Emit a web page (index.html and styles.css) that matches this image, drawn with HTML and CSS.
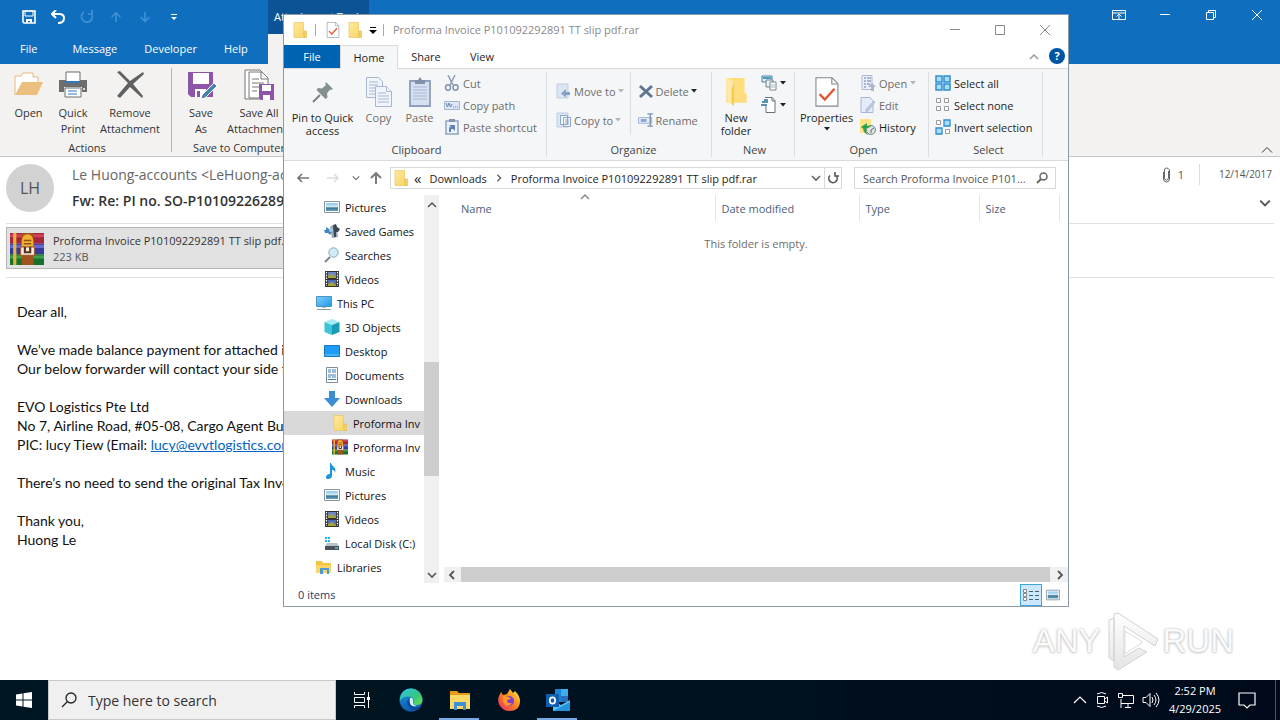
FILE: index.html
```html
<!DOCTYPE html>
<html lang="en">
<head>
<meta charset="utf-8">
<title>Desktop</title>
<link rel="stylesheet" href="styles.css">
</head>
<body>
<svg class="sprite" aria-hidden="true">
  <defs>
    <linearGradient id="gFolder" x1="0" x2="1" y1="0" y2="1"><stop offset="0" stop-color="#ffe9a0"/><stop offset="1" stop-color="#f8d362"/></linearGradient>
    <linearGradient id="gScreen" x1="0" x2="1" y1="0" y2="1"><stop offset="0" stop-color="#7fd0fa"/><stop offset="1" stop-color="#1f98e8"/></linearGradient>
    <linearGradient id="gPhoto" x1="0" x2="0" y1="0" y2="1"><stop offset="0" stop-color="#8cc4f0"/><stop offset=".5" stop-color="#d6ecf2"/><stop offset=".6" stop-color="#35708a"/><stop offset="1" stop-color="#70a6c8"/></linearGradient>
    <linearGradient id="gEdge" x1="0" x2="1" y1="0" y2="1"><stop offset="0" stop-color="#2cc4e8"/><stop offset=".6" stop-color="#36c77c"/><stop offset="1" stop-color="#6fe04c"/></linearGradient>
    <linearGradient id="gEdge2" x1="0" x2="0" y1="0" y2="1"><stop offset="0" stop-color="#1b9de2"/><stop offset="1" stop-color="#1058b0"/></linearGradient>
    <linearGradient id="gFox" x1="1" x2="0" y1="0" y2="1"><stop offset="0" stop-color="#fff04a"/><stop offset=".45" stop-color="#ff8a1c"/><stop offset="1" stop-color="#f0206c"/></linearGradient>
    <linearGradient id="gLogo" x1="0" x2="0" y1="0" y2="1"><stop offset="0" stop-color="#fff"/><stop offset="1" stop-color="#e4e4e4"/></linearGradient>
  </defs>
  <symbol id="folder" viewBox="0 0 16 16"><path d="M2 .5h9.500v12h2v3H2z" fill="url(#gFolder)" stroke="#eac65c" stroke-width=".7"/><path d="M12 9h2.500v6.500H12z" fill="#f6d365" stroke="#dfb94d" stroke-width=".6"/></symbol>
  <symbol id="folder-big" viewBox="0 0 24 28"><path d="M3 1h17v14l2 1v8H3z" fill="#ffdc7c"/><path d="M3 1l7 3v23l-6-4z" fill="#ffe9a8"/><path d="M10 4v23l-2-2V12z" fill="#f4c64d"/></symbol>
  <symbol id="rar" viewBox="0 0 32 32"><path d="M0 1h32v10H0z" fill="#a3263c"/><path d="M0 2h32v3H0z" fill="#cf4459"/><path d="M0 11h32v10H0z" fill="#34399a"/><path d="M0 12h32v3H0z" fill="#6468d0"/><path d="M0 21h32v10H0z" fill="#17702b"/><path d="M0 22h32v3H0z" fill="#3aa149"/><path d="M3 1h3v30H3z" fill="#e4b53e"/><path d="M11 1h11v30H11z" fill="#a0551f"/><path d="M11 8q1-6 5.500-6T22 8v6H11z" fill="#f2b02e"/><path d="M13 8h7M13 11h7" stroke="#8f541a" stroke-width="1.500"/><path d="M10 14h13v8H10z" fill="#f4eee5" stroke="#a55b30"/><path d="M14 14v5h5v-5" fill="none" stroke="#543219" stroke-width="2"/></symbol>
  <symbol id="photo" viewBox="0 0 16 16"><path d="M.5 2.500h15v11H.5z" fill="#fff" stroke="#8795a3"/><path d="M2 4h12v8H2z" fill="url(#gPhoto)"/></symbol>
  <symbol id="games" viewBox="0 0 16 16"><path d="M6 4q5-5 7 2l1 8-6 1z" fill="#9aa8b4"/><path d="M9 2l3-1 1 3 3 2-2 3h-2v5h-2z" fill="#3c4650"/><path d="M0 7h2V4l3 2h3v3l-2 3-2-2H1z" fill="#4487c0"/><circle cx="7" cy="7" r="2" fill="#a4cdec"/></symbol>
  <symbol id="lens" viewBox="0 0 16 16"><path d="M6 10l-5 5" stroke="#7a8288" stroke-width="2"/><circle cx="9.500" cy="5.500" r="4.700" fill="#cfeaf8" stroke="#8da5b4"/></symbol>
  <symbol id="film" viewBox="0 0 16 16"><path d="M1 0h14v16H1z" fill="#303236"/><path d="M2.500 1v14M13.500 1v14" stroke="#fff" stroke-width="1.300" stroke-dasharray="1.500 1.200"/><path d="M4 1h8v6H4z" fill="#6f86c4"/><path d="M4 9h8v6H4z" fill="#516fb5"/><path d="M4 5l4-2 4 3v1H4zM4 13l4-2 4 3v1H4z" fill="#a5a33a"/></symbol>
  <symbol id="pc" viewBox="0 0 16 16"><path d="M.5 1.500h15v10H.5z" fill="url(#gScreen)" stroke="#4d93bd"/><path d="M1 14.500h14" stroke="#8a979e"/><path d="M6 12h4v1H6z" fill="#abc"/></symbol>
  <symbol id="cube" viewBox="0 0 16 16"><path d="M8 0l7.500 3L8 6 .5 3z" fill="#a4ebf4"/><path d="M.5 3L8 6v10L.5 13z" fill="#3cc3d8"/><path d="M15.500 3L8 6v10l7.500-3z" fill="#199bb6"/></symbol>
  <symbol id="desk" viewBox="0 0 16 16"><path d="M.5 2.500h15v11H.5z" fill="#1d9bf5" stroke="#1478c5"/><path d="M1 12h14" stroke="#7cc8ff"/></symbol>
  <symbol id="doc" viewBox="0 0 16 16"><path d="M2.500.5h11v15h-11z" fill="#fff" stroke="#7e8d98"/><path d="M4 3h3M8 3h4M4 5h3M8 5h4M4 8h8M4 10h3M8 10h4M4 12.500h8" stroke="#3a7fb2"/></symbol>
  <symbol id="down" viewBox="0 0 16 16"><path d="M5 0h6v7h5l-8 9-8-9h5z" fill="#3c8ed4"/></symbol>
  <symbol id="note" viewBox="0 0 16 16"><path d="M7 0c1 4 6 4 4 10 0-3-2-3-3-3v6c0 2-2 3-4 3s-3-2-1-4c1-1 2-1 3-1V0z" fill="#1b95e0"/></symbol>
  <symbol id="disk" viewBox="0 0 16 16"><path d="M1 2h2v2H1zM4 2h2v2H4zM1 5h2v2H1zM4 5h2v2H4z" fill="#19b6ea"/><path d="M3 8h10l2 3H1z" fill="#bac2c8"/><path d="M1 11h14v4H1z" fill="#49525a"/><path d="M11 13h3" stroke="#8ee"/></symbol>
  <symbol id="libs" viewBox="0 0 16 16"><path d="M0 2h6l1 2h8v10H0z" fill="#f5c343"/><path d="M0 6h15v8H0z" fill="#fbd667"/><path d="M4 15V9h9v6h-2v-4H7v4z" fill="#4c9ad2"/></symbol>
  <symbol id="sheet-check" viewBox="0 0 22 28"><path d="M.7.7h15l5.500 5.500v21H.7z" fill="#fff" stroke="#7c8792"/><path d="M15.500 1v5.500H21" fill="none" stroke="#7c8792"/><path d="M4 16l5 5 9-10" fill="none" stroke="#e2562e" stroke-width="2.200"/></symbol>
  <symbol id="pin" viewBox="0 0 24 24"><path d="M15 2l7 7-2 1-1-.5-3 4 .5 4-2 1.500-9-9L7 8l4 .5 4-3.500-.8-1z" fill="#839090"/><path d="M9 15l-7 7" stroke="#77827f" stroke-width="2"/></symbol>
  <symbol id="copy" viewBox="0 0 26 30"><g fill="#f0f4fb" stroke="#a7b7d3"><path d="M.5.5h12l4 4v16H.5z"/><path d="M9.500 9.500h11l5 5v15h-16z"/><path d="M20.500 9.500v5h5M3 5h9M3 8h9M3 11h6M3 14h6M3 17h6M12 16h8M12 19h11M12 22h11M12 25h11"/></g></symbol>
  <symbol id="paste" viewBox="0 0 22 30"><path d="M1 4h20v25H1z" fill="#d6e0f0" stroke="#8d9fbc" stroke-width="1.800"/><path d="M6 3h3l2-3 2 3h3v4H6z" fill="#8191aa"/><path d="M4 10h14M4 13h14M4 16h14M4 19h14M4 22h14" stroke="#a7b8d4"/></symbol>
  <symbol id="scissors" viewBox="0 0 16 16"><path d="M4 0l5 10M11 0L6 10" stroke="#92a2b2" stroke-width="1.600"/><g fill="none" stroke="#7f93ae" stroke-width="1.500"><ellipse cx="4" cy="12.500" rx="2.500" ry="2.700"/><ellipse cx="11.500" cy="12.500" rx="2.500" ry="2.700"/></g></symbol>
  <symbol id="path" viewBox="0 0 16 16"><path d="M.5 4.500h15v8H.5z" fill="#dbe6f6" stroke="#a4b8d6"/><path d="M2 6l1.500 4L5 6l1.500 4L8 7M9 10h1M11 10h1M13 10h1" fill="none" stroke="#6b83ad"/></symbol>
  <symbol id="shortcut" viewBox="0 0 16 16"><path d="M2 2h12v13H2z" fill="#edf3fb" stroke="#8ea2bf" stroke-width="1.500"/><path d="M5 0h6v3H5z" fill="#8294b0"/><path d="M5 13V9q0-1 1-1h1L5 6h6v6L9 10H8q-1 0-1 1v2z" fill="#5d81b8"/></symbol>
  <symbol id="move" viewBox="0 0 16 16"><path d="M1 1h11v14H1z" fill="#dbe5f4" stroke="#c0cee2"/><path d="M14 9h-4V6l-5 4.500 5 4V12h4z" fill="#849fc8"/></symbol>
  <symbol id="copyto" viewBox="0 0 16 16"><path d="M1 1h11v14H1z" fill="#dbe5f4" stroke="#c0cee2"/><path d="M4.500 3.500h7v9h-7zM7.500 5.500h7v9h-7z" fill="#f5f8fc" stroke="#8da5ca"/><path d="M9 8h4M9 10h4M9 12h4" stroke="#8da5ca"/></symbol>
  <symbol id="del" viewBox="0 0 16 16"><path d="M2 3l12 11M14 3L2 14" stroke="#5f7594" stroke-width="3"/></symbol>
  <symbol id="rename" viewBox="0 0 17 16"><path d="M.5 5.500h14v6H.5z" fill="#e5edf8" stroke="#9bb2d2"/><path d="M3 7h6v3H3z" fill="#88a3cc"/><path d="M10 1.500h6M13 1.500v13M10 14.500h6" stroke="#7c92b0" stroke-width="1.500"/></symbol>
  <symbol id="newitem" viewBox="0 0 16 16"><path d="M1 1h10v6H1z" fill="#e3f3fa" stroke="#477c9b"/><path d="M2 2h8v2H2z" fill="#4e9abf"/><path d="M5 5h7v7H5z" fill="#e9eef2" stroke="#6f8290"/><path d="M9 7h6v8H9z" fill="#fff" stroke="#7a8791"/><path d="M10 10h4M10 12h4" stroke="#a9b2ba"/></symbol>
  <symbol id="easy" viewBox="0 0 16 16"><path d="M4 .5h7l3 3v12H5V9" fill="#fff" stroke="#66737e"/><path d="M11 0v4h3" fill="none" stroke="#66737e"/><path d="M1 5h6M0 8h6M3 3h4" stroke="#26719b" stroke-width="1.500"/></symbol>
  <symbol id="openi" viewBox="0 0 16 16"><path d="M2 .5h10v14H2z" fill="#ebf0fa" stroke="#adbad4"/><path d="M4 3h2M7 3h4M4 6h2M7 6h4M4 9h2M7 9h3M4 12h2" stroke="#8fa2c8" stroke-width="1.500"/><path d="M11 16v-4H8l4-4 4 4h-2v4z" fill="#a9b6cd"/></symbol>
  <symbol id="edit" viewBox="0 0 16 16"><path d="M1 .5h9l3 3v12H1z" fill="#e4ecfa" stroke="#a7b7d5"/><path d="M14 4l1 1-7 9-2 1v-3z" fill="#bdcae0" stroke="#9db0cf" stroke-width=".6"/></symbol>
  <symbol id="history" viewBox="0 0 16 16"><path d="M0 0h11v14H0z" fill="#ffe284"/><circle cx="11" cy="11" r="4.500" fill="#dde5e8" stroke="#7b858b"/><path d="M11 11l3-2M11 11v3" stroke="#666"/><path d="M7 4L1 8l5 4V9.500q3-.5 5-2.500-1-1-4 0zM3 10q1 5 6 6-3-2-3-4z" fill="#27a34a"/></symbol>
  <symbol id="selall" viewBox="0 0 16 16"><path d="M1 1h6v6H1zM9 1h6v6H9zM1 9h6v6H1zM9 9h6v6H9z" fill="#aadcf8" stroke="#2e8fd0" stroke-width="1.500"/></symbol>
  <symbol id="selnone" viewBox="0 0 16 16"><path d="M1.500 1.500h4v4h-4zM9.500 1.500h4v4h-4zM1.500 9.500h4v4h-4zM9.500 9.500h4v4h-4z" fill="#fff" stroke="#9a9a9a"/></symbol>
  <symbol id="selinv" viewBox="0 0 16 16"><path d="M1.500 1.500h4v4h-4zM10.500 10.500h4v4h-4z" fill="#fff" stroke="#9a9a9a"/><path d="M9 1h6v6H9zM1 9h6v6H1z" fill="#aadcf8" stroke="#2e8fd0" stroke-width="1.300"/></symbol>
  <symbol id="chev-down" viewBox="0 0 10 10"><path d="M1 3l4 4 4-4" fill="none" stroke="currentColor" stroke-width="1.600"/></symbol>
  <symbol id="chev-up" viewBox="0 0 10 10"><path d="M1 7l4-4 4 4" fill="none" stroke="currentColor" stroke-width="1.500"/></symbol>
  <symbol id="chev-thin" viewBox="0 0 12 12"><path d="M1 8.500l5-5 5 5" fill="none" stroke="currentColor"/></symbol>
  <symbol id="chev-left" viewBox="0 0 10 10"><path d="M7 1L3 5l4 4" fill="none" stroke="currentColor" stroke-width="1.800"/></symbol>
  <symbol id="chev-right" viewBox="0 0 10 10"><path d="M3 1l4 4-4 4" fill="none" stroke="currentColor" stroke-width="1.800"/></symbol>
  <symbol id="caret" viewBox="0 0 6 4"><path d="M0 0h6L3 3.500z" fill="currentColor"/></symbol>
  <symbol id="arrow" viewBox="0 0 14 14"><path d="M13 7H2M6 3L2 7l4 4" fill="none" stroke="currentColor" stroke-width="1.700"/></symbol>
  <symbol id="arrow-up" viewBox="0 0 14 14"><path d="M7 13V2M2 7l5-5 5 5" fill="none" stroke="currentColor" stroke-width="1.900"/></symbol>
  <symbol id="close" viewBox="0 0 10 10"><path d="M0 0l10 10M10 0L0 10" stroke="currentColor"/></symbol>
  <symbol id="min" viewBox="0 0 10 10"><path d="M0 4.500h10" stroke="currentColor"/></symbol>
</svg>

<div class="screen">
  <main class="outlook">
    <header class="ol-head">
      <div class="ol-left">
        <div class="ol-quick">
          <button aria-label="Save"><svg class="s14" viewBox="0 0 14 14"><path d="M1 1h12v12H2l-1-1z" fill="none" stroke="#fff" stroke-width="1.600"/><path d="M3 1h8v5H3z" fill="none" stroke="#fff"/><path d="M4 9h6v4H8v-2H6v2H4z" fill="#fff"/></svg></button>
          <button aria-label="Undo"><svg class="s14" viewBox="0 0 14 14"><path d="M1 4h7q5 0 5 4 0 5-6 5M5 0L1 4l4 4" fill="none" stroke="#fff" stroke-width="2"/></svg></button>
          <button aria-label="Redo" class="dim"><svg class="s14" viewBox="0 0 14 14"><path d="M4 2a5.500 5.500 0 1 0 7 1M12 0v4H8" fill="none" stroke="currentColor" stroke-width="1.700"/></svg></button>
          <button aria-label="Previous item" class="dim"><svg class="s12"><use href="#arrow-up"/></svg></button>
          <button aria-label="Next item" class="dim"><svg class="s12 turn"><use href="#arrow-up"/></svg></button>
          <button aria-label="Customize toolbar"><svg class="s8" viewBox="0 0 8 8"><path d="M1 1.500h6" stroke="#fff"/><path d="M1 4h6L4 7z" fill="#fff"/></svg></button>
        </div>
        <nav class="ol-tabs"><button>File</button><button>Message</button><button>Developer</button><button>Help</button></nav>
      </div>
      <div class="ol-tool"><span>Attachment Tools</span><div class="ol-tool-tab"></div></div>
      <h1 class="ol-title">Fw: Re: PI no. SO-P101092262891 - Message (Plain Text)</h1>
      <div class="ol-win">
        <button aria-label="Ribbon display options"><svg class="s14" viewBox="0 0 14 14"><path d="M.5 2.500h13v9H.5zM.5 5h13M7 11V6M4.500 8.500L7 6l2.500 2.500" fill="none" stroke="#fff"/></svg></button>
        <button aria-label="Minimize"><svg class="s10"><use href="#min"/></svg></button>
        <button aria-label="Restore"><svg class="s10" viewBox="0 0 10 10"><path d="M.5 2.500h7v7h-7zM2.500 2V.5h7v7H8" fill="none" stroke="#fff"/></svg></button>
        <button aria-label="Close"><svg class="s10"><use href="#close"/></svg></button>
      </div>
    </header>
    <section class="ol-ribbon">
      <div class="ol-group actions">
        <div class="ol-btns">
          <button class="w-open"><svg class="s32" viewBox="0 0 32 32"><path d="M2 26V7h6l2-3h10v4h5v6" fill="#fff" stroke="#e6b97e"/><path d="M2 26l7-13h21l-6 13z" fill="#ebc07e"/></svg>Open</button>
          <button class="w-print"><svg class="s32" viewBox="0 0 32 32"><path d="M2 11h28v12h-5v-5H7v5H2z" fill="#6d6d6d"/><path d="M9 3h14v10H9z" fill="#fff" stroke="#6d6d6d"/><path d="M9 13h14" stroke="#2e77c2" stroke-width="2"/><path d="M8 19h16v9H8z" fill="#fff" stroke="#6d6d6d"/><path d="M11 22h9M11 25h9" stroke="#2e77c2"/><circle cx="27" cy="20" r="1" fill="#fff"/></svg>Quick<br>Print</button>
          <button class="w-remove"><svg class="s32" viewBox="0 0 32 32"><path d="M3 3l11 11L3 27l3 2 10-11 12 11 1-2-10-12 11-10-1-2-13 9L6 2z" fill="#606060"/></svg>Remove<br>Attachment</button>
        </div>
        <div class="ol-label">Actions</div>
      </div>
      <div class="ol-group save">
        <div class="ol-btns">
          <button class="w-save"><svg class="s32" viewBox="0 0 32 32"><path d="M3 3h25v25H6l-3-3z" fill="#8c55a9"/><path d="M8 4h16v11H8zM10 20h11v8H10z" fill="#fff"/><path d="M12 22h3v6h-3z" fill="#8c55a9"/><path d="M16 30l1-4 12-12 3 3-12 12z" fill="#4681b5" stroke="#fff"/></svg>Save<br>As</button>
          <button class="w-saveall"><svg class="s32" viewBox="0 0 32 32"><path d="M2 1h15l4 4v25H2z" fill="#fff" stroke="#777"/><path d="M6 3h13l6 6v20H6z" fill="#fff" stroke="#777"/><path d="M18 3v7h7M9 10h7M9 14h12M9 18h7M9 22h5" fill="none" stroke="#777"/><path d="M16 15h15v16H18l-2-2z" fill="#8c55a9"/><path d="M19 16h9v6h-9zM20 26h7v5h-7z" fill="#fff"/></svg>Save All<br>Attachments</button>
        </div>
        <div class="ol-label">Save to Computer</div>
      </div>
      <button class="collapse" aria-label="Collapse the ribbon"><svg class="s12"><use href="#chev-thin"/></svg></button>
    </section>
    <section class="mail-head">
      <div class="avatar">LH</div>
      <div class="who"><div class="from">Le Huong-accounts &lt;LeHuong-accounts&gt;</div><div class="subject">Fw: Re: PI no. SO-P101092262891</div></div>
      <div class="meta"><div class="meta-top"><svg class="clip" viewBox="0 0 8 16"><path d="M6 4v7q0 2-2 2t-2-2V3q0-2 2-2t3 2v9q0 3-3 3t-3-3V5" fill="none" stroke="#666"/></svg><span class="count">1</span><time>12/14/2017</time></div><button aria-label="Expand header"><svg class="s12"><use href="#chev-down"/></svg></button></div>
    </section>
    <section class="attachments"><button class="attachment"><svg class="s34"><use href="#rar"/></svg><span>Proforma Invoice P101092292891 TT slip pdf.rar<br><small>223 KB</small></span></button></section>
    <article class="mail-body">
      <p>Dear all,</p>
      <p>We’ve made balance payment for attached invoice.<br>Our below forwarder will contact your side for pickup.</p>
      <p>EVO Logistics Pte Ltd<br>No 7, Airline Road, #05-08, Cargo Agent Building<br>PIC: lucy Tiew (Email: <a href="#mail">lucy@evvtlogistics.com</a>)</p>
      <p>There’s no need to send the original Tax Invoice.</p>
      <p>Thank you,<br>Huong Le</p>
    </article>
    <div class="watermark"><span>ANY</span><svg viewBox="0 0 60 64"><path d="M16 4l40 26-3 7-31-20v31l15-9 8 4-29 18-4-3V5zM7 11l5-2v43l-5-3z" fill="url(#gLogo)" stroke="#d2d2d2"/><path d="M23 22l18 11-18 12z" fill="#fff" stroke="#ddd"/></svg><span>RUN</span></div>
  </main>

  <section class="explorer">
    <header class="ex-title">
      <svg class="s16"><use href="#folder"/></svg><i class="bar"></i>
      <button aria-label="Properties"><svg class="s16"><use href="#sheet-check"/></svg></button>
      <button aria-label="New folder"><svg class="s16"><use href="#folder"/></svg></button>
      <button aria-label="Customize"><svg class="s8" viewBox="0 0 8 8"><path d="M1 1.500h6" stroke="#000"/><path d="M0 4h8L4 8z"/></svg></button><i class="bar"></i>
      <h2>Proforma Invoice P101092292891 TT slip pdf.rar</h2>
      <div class="ex-win"><button aria-label="Minimize"><svg class="s10"><use href="#min"/></svg></button><button aria-label="Maximize"><svg class="s10" viewBox="0 0 10 10"><path d="M.5.5h9v9h-9z" fill="none" stroke="currentColor"/></svg></button><button aria-label="Close"><svg class="s10"><use href="#close"/></svg></button></div>
    </header>
    <nav class="ex-tabs"><button class="file">File</button><button class="active">Home</button><button>Share</button><button>View</button><span class="grow"></span><button class="mini" aria-label="Minimize ribbon"><svg class="s10"><use href="#chev-up"/></svg></button><button class="help" aria-label="Help">?</button></nav>
    <section class="ex-ribbon">
      <div class="group g-clip"><div class="gbody">
        <button class="big w-pin"><svg class="s32 pad"><use href="#pin"/></svg>Pin to Quick<br>access</button>
        <button class="big w-copy off"><svg class="s30"><use href="#copy"/></svg>Copy</button>
        <button class="big w-copy off"><svg class="s30"><use href="#paste"/></svg>Paste</button>
        <div class="stack"><button class="off"><svg class="s16"><use href="#scissors"/></svg>Cut</button><button class="off"><svg class="s16"><use href="#path"/></svg>Copy path</button><button class="off"><svg class="s16"><use href="#shortcut"/></svg>Paste shortcut</button></div>
      </div><div class="glabel">Clipboard</div></div>
      <div class="group g-org"><div class="gbody">
        <div class="stack two"><button class="off"><svg class="s16"><use href="#move"/></svg>Move to<svg class="car"><use href="#caret"/></svg></button><button class="off"><svg class="s16"><use href="#copyto"/></svg>Copy to<svg class="car"><use href="#caret"/></svg></button></div>
        <div class="stack two split"><button class="off"><svg class="s16"><use href="#del"/></svg>Delete<svg class="car dark"><use href="#caret"/></svg></button><button class="off"><svg class="s16"><use href="#rename"/></svg>Rename</button></div>
      </div><div class="glabel">Organize</div></div>
      <div class="group g-new"><div class="gbody">
        <button class="big w-new"><svg class="s30"><use href="#folder-big"/></svg>New<br>folder</button>
        <div class="stack"><button aria-label="New item"><svg class="s16"><use href="#newitem"/></svg><svg class="car dark"><use href="#caret"/></svg></button><button aria-label="Easy access"><svg class="s16"><use href="#easy"/></svg><svg class="car dark"><use href="#caret"/></svg></button></div>
      </div><div class="glabel">New</div></div>
      <div class="group g-open"><div class="gbody">
        <button class="big w-prop"><svg class="s30"><use href="#sheet-check"/></svg>Properties<svg class="car dark"><use href="#caret"/></svg></button>
        <div class="stack"><button class="off"><svg class="s16"><use href="#openi"/></svg>Open<svg class="car"><use href="#caret"/></svg></button><button class="off"><svg class="s16"><use href="#edit"/></svg>Edit</button><button><svg class="s16"><use href="#history"/></svg>History</button></div>
      </div><div class="glabel">Open</div></div>
      <div class="group g-sel"><div class="gbody">
        <div class="stack"><button><svg class="s16"><use href="#selall"/></svg>Select all</button><button><svg class="s16"><use href="#selnone"/></svg>Select none</button><button><svg class="s16"><use href="#selinv"/></svg>Invert selection</button></div>
      </div><div class="glabel">Select</div></div>
    </section>
    <div class="ex-nav">
      <div class="arrows"><button aria-label="Back"><svg class="s14"><use href="#arrow"/></svg></button><button class="faint" aria-label="Forward"><svg class="s14 turn"><use href="#arrow"/></svg></button><button aria-label="Recent"><svg class="s8"><use href="#chev-down"/></svg></button><button aria-label="Up"><svg class="s14"><use href="#arrow-up"/></svg></button></div>
      <div class="address"><svg class="s16"><use href="#folder"/></svg><span class="laquo">«</span><span>Downloads</span><svg class="s8"><use href="#chev-right"/></svg><span>Proforma Invoice P101092292891 TT slip pdf.rar</span><span class="grow"></span><svg class="s10"><use href="#chev-down"/></svg><button aria-label="Refresh"><svg class="s12" viewBox="0 0 12 12"><path d="M9 3.500a4.200 4.200 0 1 1-6 0M8 0v4h4" fill="none" stroke="#555" stroke-width="1.600"/></svg></button></div>
      <label class="find"><input type="text" aria-label="Search folder" value="Search Proforma Invoice P101..."><svg class="s12" viewBox="0 0 12 12"><circle cx="7.500" cy="4.500" r="3.500" fill="none" stroke="#666" stroke-width="1.500"/><path d="M5 7l-4 4" stroke="#666" stroke-width="2"/></svg></label>
    </div>
    <div class="ex-main">
      <ul class="tree">
        <li class="l2"><svg class="s16"><use href="#photo"/></svg>Pictures</li>
        <li class="l2"><svg class="s16"><use href="#games"/></svg>Saved Games</li>
        <li class="l2"><svg class="s16"><use href="#lens"/></svg>Searches</li>
        <li class="l2"><svg class="s16"><use href="#film"/></svg>Videos</li>
        <li><svg class="s16"><use href="#pc"/></svg>This PC</li>
        <li class="l2"><svg class="s16"><use href="#cube"/></svg>3D Objects</li>
        <li class="l2"><svg class="s16"><use href="#desk"/></svg>Desktop</li>
        <li class="l2"><svg class="s16"><use href="#doc"/></svg>Documents</li>
        <li class="l2"><svg class="s16"><use href="#down"/></svg>Downloads</li>
        <li class="l3 current"><svg class="s16"><use href="#folder"/></svg>Proforma Inv</li>
        <li class="l3"><svg class="s16"><use href="#rar"/></svg>Proforma Inv</li>
        <li class="l2"><svg class="s16"><use href="#note"/></svg>Music</li>
        <li class="l2"><svg class="s16"><use href="#photo"/></svg>Pictures</li>
        <li class="l2"><svg class="s16"><use href="#film"/></svg>Videos</li>
        <li class="l2"><svg class="s16"><use href="#disk"/></svg>Local Disk (C:)</li>
        <li><svg class="s16"><use href="#libs"/></svg>Libraries</li>
      </ul>
      <div class="vbar"><svg class="s10"><use href="#chev-up"/></svg><div class="track"><i></i></div><svg class="s10"><use href="#chev-down"/></svg></div>
      <div class="files">
        <table><thead><tr><th class="c-name">Name<svg class="sort s10"><use href="#chev-up"/></svg></th><th class="c-date">Date modified</th><th class="c-type">Type</th><th class="c-size">Size</th><th class="c-end"></th></tr></thead>
        <tbody><tr><td colspan="5">This folder is empty.</td></tr></tbody></table>
        <div class="hbar"><svg class="s10"><use href="#chev-left"/></svg><i></i><svg class="s10"><use href="#chev-right"/></svg></div>
      </div>
    </div>
    <footer class="ex-status"><span>0 items</span><span class="grow"></span>
      <button class="on" aria-label="Details view"><svg class="s16" viewBox="0 0 16 16"><path d="M.5 2.500h3v3h-3zM.5 6.500h3v3h-3zM.5 10.500h3v3h-3z" fill="#fff" stroke="#888"/><path d="M6 4.500h4M12 4.500h4M6 8.500h4M12 8.500h4M6 12.500h4M12 12.500h4" stroke="#47616e"/></svg></button>
      <button aria-label="Large icons"><svg class="s14"><use href="#photo"/></svg></button></footer>
  </section>

  <footer class="taskbar">
    <button class="start" aria-label="Start"><svg class="s16" viewBox="0 0 16 16"><path d="M0 2.500L6.500 1.500v6H0zM7.500 1.300L16 0v7.500H7.500zM0 8.500h6.500v6L0 13.500zM7.500 8.500H16V16l-8.500-1.300z" fill="#fff"/></svg></button>
    <label class="tb-search"><svg class="s16" viewBox="0 0 16 16"><circle cx="10" cy="6" r="5" fill="none" stroke="#222" stroke-width="1.300"/><path d="M6.500 9.500L1 15" stroke="#222" stroke-width="1.300"/></svg><input type="text" aria-label="Search" value="Type here to search"></label>
    <button class="app" aria-label="Task view"><svg class="s16" viewBox="0 0 16 16"><path d="M.5 0v2.500h10V0M.5 16v-2.500h10V16M.5 5.500h10v5H.5zM14.500 0v16" fill="none" stroke="#fff"/><path d="M13 5h3v3h-3z" fill="#fff"/></svg></button>
    <button class="app" aria-label="Edge"><svg class="s24" viewBox="0 0 24 24"><circle cx="12" cy="12" r="11.500" fill="url(#gEdge2)"/><path d="M1 10Q3 .5 12 .5T23.500 11q0 6-6 6-4 0-3-3 1-5-4-5.500Q3 8 1 13z" fill="url(#gEdge)"/><path d="M10 10q-4 4 0 9 3 4 8 3 3-1 4-4-3 2-7 1-4-1-4-5 0-2 1-3z" fill="#0b4c96"/><path d="M11 10q3-1 3 3-1 4 4 5-6 1-7-3-1-3 0-5z" fill="#d8f4ff"/></svg></button>
    <button class="app open" aria-label="File Explorer"><svg class="s24" viewBox="0 0 24 24"><path d="M2 3h7l2 2h11v5H2z" fill="#e59a1a"/><path d="M2 7h20v14H2z" fill="#ffd766"/><path d="M6 22v-8h12v8h-3v-4H9v4z" fill="#3f91d6"/></svg></button>
    <button class="app" aria-label="Firefox"><svg class="s24" viewBox="0 0 24 24"><path d="M12 23A11 11 0 0 1 2 8l2-4 2 3 4-1 3-5 3 4 2-2q5 5 5 10 0 10-11 10z" fill="url(#gFox)"/><circle cx="12" cy="13" r="5" fill="#8239d4"/><path d="M6 8l6 1 2 2-4 1q0 4 5 3-2 4-7 2-3-3-2-9z" fill="#ff9c1f"/></svg></button>
    <button class="app open" aria-label="Outlook"><svg class="s24" viewBox="0 0 24 24"><path d="M9 1h13v13H9z" fill="#1b84d8"/><path d="M15 1h7v7h-7z" fill="#3caeea"/><path d="M15 8h7v6h-7z" fill="#2a6fbf"/><path d="M7 12l8 5 9-5v11H7z" fill="#5bc3f2"/><path d="M7 23l17-9v9z" fill="#2393da"/><path d="M0 6h13v13H0z" fill="#0f5eb2"/><ellipse cx="6.500" cy="12.500" rx="2.700" ry="3.200" fill="none" stroke="#fff" stroke-width="1.700"/></svg></button>
    <span class="grow"></span>
    <div class="tray">
      <svg class="s14" viewBox="0 0 14 14"><path d="M1 10l6-6 6 6" fill="none" stroke="#fff" stroke-width="1.200"/></svg>
      <svg class="s16" viewBox="0 0 16 16"><path d="M3.500 4.500h7v7h-7zM10.500 7l3-2v6l-3-2M3 2q5-3 9 0M3 14q5 3 9 0" fill="none" stroke="#fff"/></svg>
      <svg class="s18" viewBox="0 0 18 18"><path d="M5 4.500h11.500v8H4M4 8v9M8 16.500h6M11 13v3M1.500 2.500h4v4h-4z" fill="none" stroke="#fff"/></svg>
      <svg class="s18" viewBox="0 0 18 18"><path d="M1 6.500h3l4-4v13l-4-4H1zM10 6q2 3 0 6M12 4q4 5 0 10M14 2q6 7 0 14" fill="none" stroke="#fff"/></svg>
    </div>
    <time class="clock">2:52 PM<br>4/29/2025</time>
    <button class="notice" aria-label="Notifications"><svg class="s18" viewBox="0 0 18 18"><path d="M1 2h16v12h-5l-3 3-3-3H1z" fill="none" stroke="#fff" stroke-width="1.200"/></svg></button>
    <span class="peek"></span>
  </footer>
</div>
</body>
</html>
```
FILE: styles.css
```css
* { box-sizing: border-box; }
body { margin: 0; font: 11px/13px "Open Sans", "Noto Sans", sans-serif; color: #1e1e1e; }
button, input { font: inherit; color: inherit; background: none; border: 0; padding: 0; margin: 0; }
input { min-width: 0; outline: 0; }
h1, h2, p, ul { margin: 0; padding: 0; font-weight: 400; }
svg { display: block; flex: none; }
.sprite { position: absolute; width: 0; height: 0; }
.s8 { width: 8px; height: 8px; }
.s10 { width: 10px; height: 10px; }
.s12 { width: 12px; height: 12px; }
.s14 { width: 14px; height: 14px; }
.s16 { width: 16px; height: 16px; }
.s18 { width: 18px; height: 18px; }
.s24 { width: 24px; height: 24px; }
.s30 { width: 30px; height: 30px; }
.s32 { width: 32px; height: 32px; }
.s34 { width: 34px; height: 34px; }
.grow { flex: 1; }
.turn { transform: rotate(180deg); }
.screen { position: relative; display: flex; flex-direction: column; min-height: 100vh; overflow: hidden; }

/* Mail window */
.outlook { position: relative; flex: 1; background: #fff; overflow: hidden; }
.ol-head { display: flex; height: 64px; background: #106ebe; color: #fff; }
.ol-left { width: 268px; flex: none; }
.ol-quick { display: flex; height: 34px; padding-left: 14px; align-items: center; }
.ol-quick button { width: 29px; display: flex; justify-content: center; }
.ol-quick .dim { color: #3f91d4; }
.ol-tabs { display: flex; height: 30px; padding-left: 20px; gap: 27px; }
.ol-tabs button { padding-bottom: 1px; }
.ol-tabs button:nth-child(2) { margin-left: 8px; }
.ol-tool { width: 101px; flex: none; display: flex; flex-direction: column; background: #0b5394; }
.ol-tool span { height: 34px; line-height: 33px; padding-left: 6px; }
.ol-tool-tab { flex: 1; background: #f3f2f1; }
.ol-title { flex: 1; padding-left: 122px; font-size: 11px; line-height: 35px; }
.ol-win { display: flex; height: 30px; }
.ol-win button { width: 46px; display: flex; align-items: center; justify-content: center; }
.ol-ribbon { position: relative; display: flex; height: 93px; background: #f3f2f1; border-bottom: 1px solid #c8c6c4; line-height: 16px; color: #333; }
.ol-group { padding-top: 4px; }
.ol-group.actions { width: 171px; padding-left: 3px; }
.ol-group.save { width: 132px; padding-left: 3px; border-left: 1px solid #b5b5b5; margin: 4px 0; padding-top: 0; }
.ol-btns { display: flex; height: 72px; }
.ol-btns button { display: flex; flex-direction: column; align-items: center; }
.ol-btns button { display: block; align-self: flex-start; text-align: center; }
.ol-btns svg { margin: 1px auto 4px; }
.w-open { width: 51px; }
.w-print { width: 38px; }
.w-remove { width: 76px; }
.w-save { width: 52px; }
.w-saveall { width: 64px; }
.ol-label { text-align: center; }
.collapse { position: absolute; right: 7px; bottom: 0; }
.mail-head { display: flex; height: 67px; margin: 0 6px; border-bottom: 1px solid #e1e1e1; color: #555; }
.avatar { width: 48px; height: 48px; margin: 7px 18px 0 0; border-radius: 50%; background: #d2d2d2; font-size: 16px; line-height: 48px; text-align: center; flex: none; }
.who { flex: 1; font-size: 14px; line-height: 26px; padding-top: 5px; white-space: nowrap; color: #666; }
.subject { font-weight: 600; color: #333; }
.meta { display: flex; flex-direction: column; align-items: flex-end; }
.meta button { padding: 12px 3px; }
.meta-top { display: flex; align-items: center; padding: 7px 0 0; }
.clip { width: 9px; height: 16px; }
.count { padding: 4px 15px 4px 7px; border-right: 1px solid #ddd; }
.meta time { padding: 0 2px 0 19px; font-size: 10px; }
.attachments { margin: 0 6px; padding: 3px 0 8px; border-bottom: 1px solid #e1e1e1; }
.attachment { display: flex; align-items: center; width: 420px; height: 42px; padding: 1px 0 0 3px; gap: 9px; background: #e1e1e1; border: 1px solid #b4b4b4; text-align: left; line-height: 16px; color: #333; }
.attachment small { font-size: 11px; color: #555; }
.mail-body { padding: 24px 17px; font: 14px/19px Lato, "Open Sans", sans-serif; color: #111; white-space: nowrap; }
.mail-body p { margin-bottom: 19px; }
.mail-body a { color: #0563c1; }
.watermark { position: absolute; right: 46px; bottom: 7px; display: flex; align-items: center; font: 33px/60px "Liberation Sans Narrow", "Liberation Sans", sans-serif; color: #fafafa; text-shadow: 0 0 2px #b4b4b4, 0 1px 3px #ccc; }
.watermark svg { width: 62px; height: 64px; }

/* File browser window */
.explorer { position: absolute; left: 283px; top: 14px; width: 786px; background: #fff; border: 1px solid #8a9aa8; }
.ex-title { display: flex; align-items: center; height: 29px; padding-left: 8px; color: #8a8a8a; margin-bottom: 1px; }
.ex-title button { margin-right: 6px; }
.ex-title h2 { font-size: 11px; flex: 1; }
.bar { width: 1px; height: 12px; background: #aaa; margin: 0 9px 0 7px; }
.ex-title button + .bar { margin: 0 9px 0 0; }
.ex-win { display: flex; padding-right: 1px; }
.ex-title .ex-win button { width: 45px; height: 29px; margin: 0; display: flex; align-items: center; justify-content: center; }
.ex-tabs { display: flex; height: 24px; align-items: stretch; border-bottom: 1px solid #dadbdc; }
.ex-tabs button { width: 56px; }
.ex-tabs .file { background: #0063b1; color: #fff; }
.ex-tabs .active { width: 58px; background: #f5f6f7; border: 1px solid #dadbdc; border-bottom: 0; margin-bottom: -1px; }
.ex-tabs .mini { width: 24px; display: flex; align-items: center; justify-content: center; color: #999; }
.ex-tabs .help { width: 16px; height: 16px; margin: 3px 3px 0 3px; border-radius: 50%; background: #0055a5; color: #fff; font-weight: 700; line-height: 16px; }
.ex-ribbon { display: flex; height: 92px; background: #f5f6f7; border-bottom: 1px solid #dadbdc; }
.group { display: flex; flex-direction: column; margin: 3px 0; border-right: 1px solid #dcdfe2; }
.gbody { display: flex; flex: 1; }
.glabel { height: 14px; line-height: 14px; text-align: center; color: #444; }
.g-clip { width: 263px; padding-left: 3px; }
.g-org { width: 165px; padding-left: 9px; }
.g-new { width: 83px; padding-left: 3px; }
.g-open { width: 134px; padding-left: 4px; }
.g-sel { width: 114px; padding-left: 6px; }
.big { display: block; text-align: center; align-self: flex-start; white-space: nowrap; }
.big svg.s32 { margin: 4px auto 3px; }
.big svg.s30 { margin: 5px auto 4px; }
.big svg.pad { padding: 4px; }
.big .car { margin: 3px auto; }
.w-pin { width: 71px; }
.w-copy { width: 41px; }
.w-copy + .stack { margin-left: 4px; }
.w-new { width: 42px; }
.w-prop { width: 55px; }
.stack { display: flex; flex-direction: column; }
.stack button { display: flex; align-items: center; height: 22px; gap: 3px; white-space: nowrap; }
.stack.two { padding-top: 8px; gap: 7px; }
.g-org .stack button { gap: 2px; }
.split { margin: 0 0 8px 6px; padding-left: 7px; border-left: 1px solid #dcdfe2; }
.g-open .stack { padding-left: 6px; }
.g-new .stack { padding-left: 4px; }
.off { color: #6d6d6d; }
.car { width: 6px; height: 4px; color: #b5b5b5; }
.car.dark { color: #222; }
.ex-nav { display: flex; height: 34px; padding: 6px 12px; }
.arrows { display: flex; align-items: center; color: #777; }
.arrows button { width: 24px; display: flex; }
.arrows button:nth-child(2) { width: 32px; padding-left: 6px; }
.arrows button:nth-child(3) { width: 17px; }
.arrows button:nth-child(4) { width: 21px; }
.arrows .faint { color: #dcdcdc; }
.address { flex: 1; display: flex; align-items: center; border: 1px solid #d9d9d9; padding-left: 2px; height: 22px; gap: 8px; white-space: nowrap; }
.address svg { color: #666; }
.address .s16 { margin-right: -3px; }
.laquo { font-size: 15px; }
.address button { display: flex; align-items: center; justify-content: center; width: 17px; height: 20px; border-left: 1px solid #d9d9d9; margin-left: -5px; }
.find { display: flex; align-items: center; width: 202px; height: 22px; margin-left: 12px; border: 1px solid #d9d9d9; padding: 0 7px 0 8px; color: #555; }
.find input { flex: 1; }
.ex-main { display: flex; height: 388px; }
.tree { width: 140px; list-style: none; overflow: hidden; color: #111; }
.tree li { display: flex; align-items: center; height: 24px; gap: 5px; padding-left: 32px; white-space: nowrap; }
.tree .l2 { padding-left: 40px; }
.tree .l3 { padding-left: 48px; }
.tree .current { background: #d9d9d9; }
.vbar { width: 15px; display: flex; flex-direction: column; align-items: center; background: #f0f0f0; padding: 5px 0 3px; color: #555; }
.track { flex: 1; width: 15px; padding-top: 152px; }
.track i { display: block; height: 114px; background: #cdcdcd; }
.files { flex: 1; display: flex; flex-direction: column; justify-content: space-between; padding-left: 5px; padding-bottom: 1px; }
table { border-collapse: collapse; table-layout: fixed; width: 100%; }
th { height: 26px; padding: 0 6px; text-align: left; font-weight: 400; color: #4c607a; border-right: 1px solid #e5e5e5; position: relative; }
.c-name { width: 271px; padding-left: 17px; }
.c-date { width: 144px; }
.c-type { width: 120px; }
.c-size { width: 80px; }
.c-end { border: 0; padding: 0; }
.sort { position: absolute; left: 136px; top: -3px; color: #888; }
td { padding: 16px 0; text-align: center; color: #6d6d6d; }
.hbar { display: flex; align-items: center; height: 15px; background: #f0f0f0; padding: 0 3px; color: #555; gap: 4px; }
.hbar i { flex: 1; height: 15px; background: #cdcdcd; margin-right: 1px; }
.ex-status { display: flex; height: 23px; padding: 0 4px 0 14px; align-items: center; color: #1e3a66; }
.ex-status button { width: 22px; height: 22px; display: flex; align-items: center; justify-content: center; }
.ex-status .on { background: #cce8ff; border: 1px solid #3da5d9; }

/* Taskbar */
.taskbar { display: flex; align-items: stretch; height: 40px; background: linear-gradient(90deg, #001722, #00101e 60%, #000a1a); color: #fff; }
.taskbar button { display: flex; align-items: center; justify-content: center; }
.start { width: 48px; }
.tb-search { display: flex; align-items: center; width: 288px; padding-left: 12px; gap: 11px; background: #f0f0f0; border: 1px solid #c8c8c8; color: #333; font-size: 14px; }
.tb-search input { flex: 1; }
.app { width: 49px; padding-left: 2px; }
.app.open { background: linear-gradient(#76a9e6, #76a9e6) center bottom / 40px 2px no-repeat; }
.tray { display: flex; align-items: center; gap: 7px; }
.clock { width: 70px; text-align: center; line-height: 18px; padding-top: 2px; }
.notice { width: 34px; margin-right: 11px; }
.peek { width: 5px; border-left: 1px solid #4a5562; }
```
